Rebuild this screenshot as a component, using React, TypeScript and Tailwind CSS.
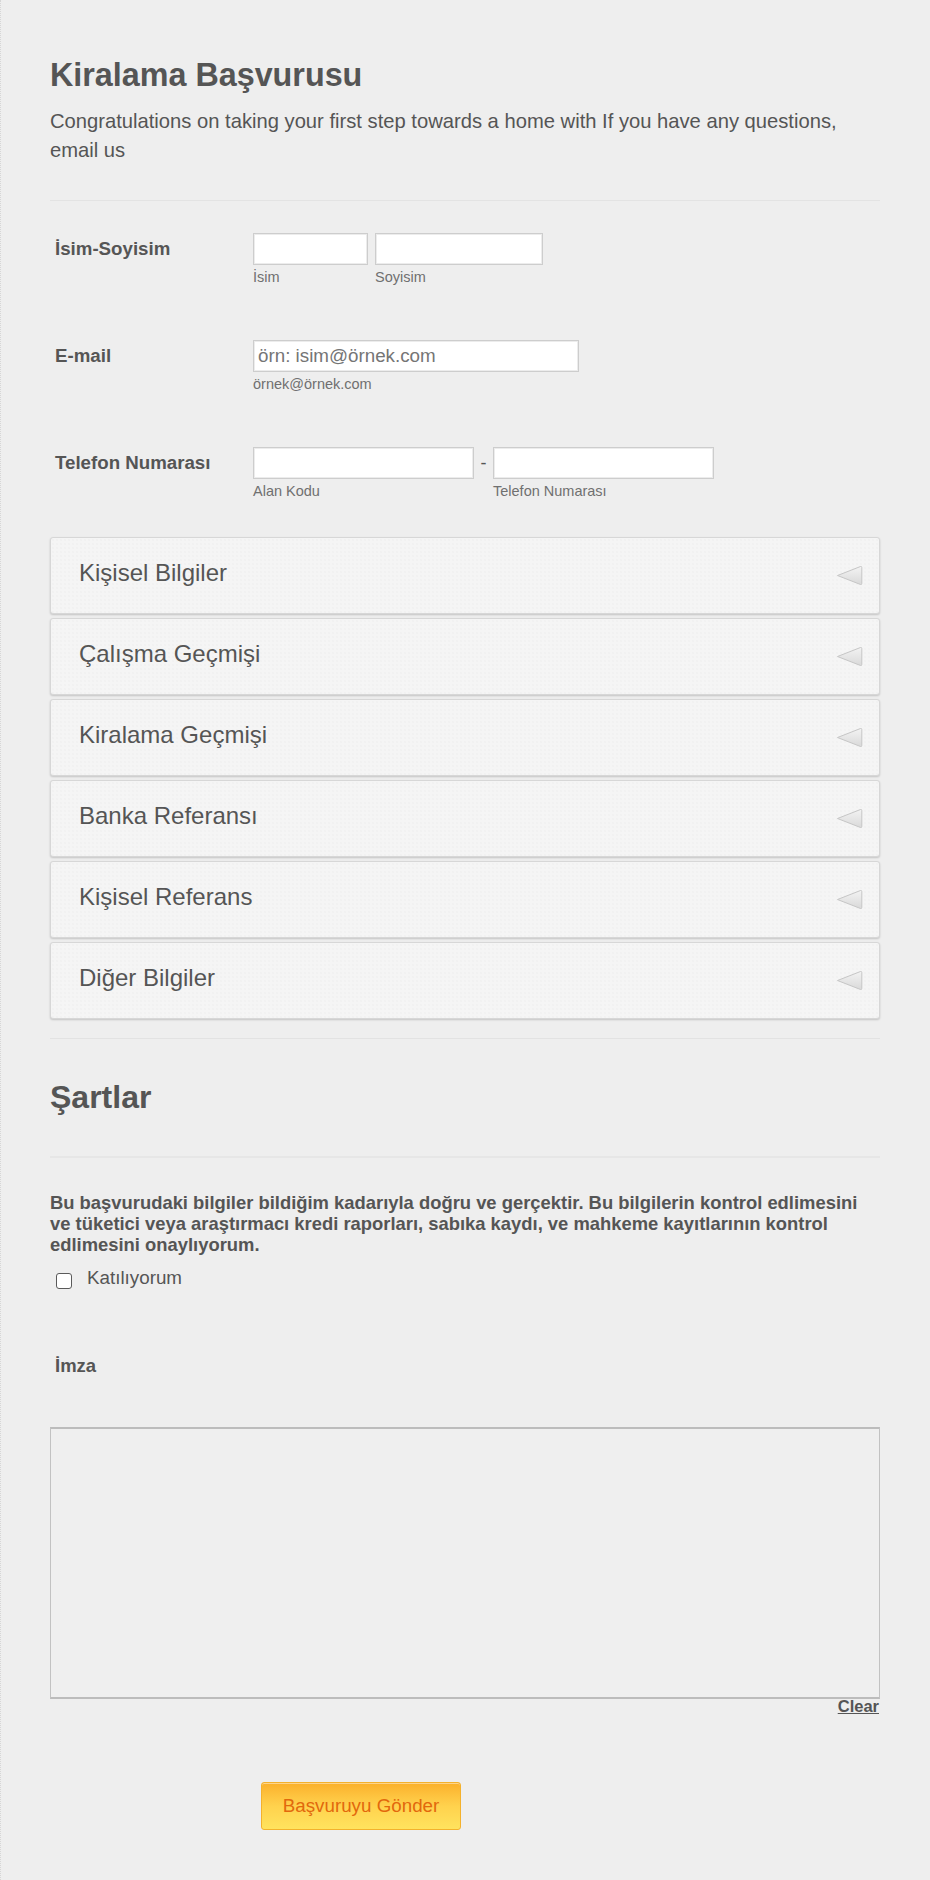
import React from "react";

const FONT = { fontFamily: '"Liberation Sans", Arial, Helvetica, sans-serif' };

function Arrow() {
  return (
    <svg width="27" height="21" viewBox="0 0 27 21" className="shrink-0">
      <defs>
        <linearGradient id="ag" x1="0" y1="0" x2="0" y2="1">
          <stop offset="0" stopColor="#f3f3f3" />
          <stop offset="1" stopColor="#d9d9d9" />
        </linearGradient>
      </defs>
      <path
        d="M1.5 10.5 L24.5 1.5 Q25.8 1.2 25.8 2.6 L25.8 18.4 Q25.8 19.8 24.5 19.5 Z"
        fill="url(#ag)"
        stroke="#c6c6c6"
        strokeWidth="1"
        strokeLinejoin="round"
      />
    </svg>
  );
}

function Panel({ title }: { title: string }) {
  return (
    <div className="h-[77px] rounded-[3px] border border-[#d7d7d7] bg-[#f5f5f5] bg-[radial-gradient(#ececec_0.6px,transparent_0.8px)] bg-[length:4px_4px] shadow-[0_1px_2px_rgba(0,0,0,0.18)] flex items-center justify-between pl-[28px] pr-[16px]">
      <span className="text-[24px] leading-[28px] mb-[5px] text-[#555555]">{title}</span>
      <Arrow />
    </div>
  );
}

function TextBox({ w, placeholder }: { w: string; placeholder?: string }) {
  return (
    <input
      type="text"
      placeholder={placeholder}
      className={`${w} h-[32px] bg-white border border-[#cdcdcd] shadow-[inset_0_0_0_1px_#ececec] px-[4px] text-[18.8px] text-[#555] placeholder:text-[#757575] outline-none`}
      style={FONT}
    />
  );
}

function Sub({ children }: { children: React.ReactNode }) {
  return <div className="mt-[4px] text-[14.5px] leading-[17px] text-[#707070]">{children}</div>;
}

function Label({ children }: { children: React.ReactNode }) {
  return (
    <div className="w-[203px] shrink-0 pl-[5px] pt-[4.5px] text-[18.7px] leading-[22px] font-bold text-[#555555]">
      {children}
    </div>
  );
}

export default function App() {
  const panels = [
    "Kişisel Bilgiler",
    "Çalışma Geçmişi",
    "Kiralama Geçmişi",
    "Banka Referansı",
    "Kişisel Referans",
    "Diğer Bilgiler",
  ];
  return (
    <div
      className="min-h-[1880px] bg-[#eeeeee] border-l border-dotted border-[#d6d6d6] pl-[49px] pr-[50px] pt-[56px] text-[#555555]"
      style={FONT}
    >
      <h1 className="text-[32.3px] leading-[38px] font-bold text-[#555555]">Kiralama Başvurusu</h1>
      <p className="mt-[13px] text-[20.2px] leading-[29px] text-[#555555]">
        Congratulations on taking your first step towards a home with If you have any questions, email us
      </p>
      <div className="mt-[35px] h-px bg-[#e3e3e3]" />

      <div className="mt-[32px] flex flex-col">
        <div className="h-[107px] flex">
          <Label>İsim-Soyisim</Label>
          <div className="flex gap-[7px]">
            <div>
              <TextBox w="w-[115px]" />
              <Sub>İsim</Sub>
            </div>
            <div>
              <TextBox w="w-[168px]" />
              <Sub>Soyisim</Sub>
            </div>
          </div>
        </div>
        <div className="h-[107px] flex">
          <Label>E-mail</Label>
          <div>
            <TextBox w="w-[326px]" placeholder="örn: isim@örnek.com" />
            <Sub>örnek@örnek.com</Sub>
          </div>
        </div>
        <div className="h-[90px] flex">
          <Label>Telefon Numarası</Label>
          <div className="flex">
            <div>
              <TextBox w="w-[221px]" />
              <Sub>Alan Kodu</Sub>
            </div>
            <div className="w-[19px] h-[32px] flex items-center justify-center text-[18px] text-[#555]">-</div>
            <div>
              <TextBox w="w-[221px]" />
              <Sub>Telefon Numarası</Sub>
            </div>
          </div>
        </div>
      </div>

      <div className="flex flex-col gap-[4px]">
        {panels.map((p) => (
          <Panel key={p} title={p} />
        ))}
      </div>

      <div className="mt-[19px] h-px bg-[#e2e2e2]" />
      <h2 className="mt-[39px] text-[32px] leading-[38px] font-bold text-[#555555]">Şartlar</h2>
      <div className="mt-[40px] h-[2px] bg-[#e6e6e6]" />

      <p className="mt-[34px] text-[18.4px] leading-[21px] font-bold text-[#555555]">
        Bu başvurudaki bilgiler bildiğim kadarıyla doğru ve gerçektir. Bu bilgilerin kontrol edlimesini ve tüketici veya
        araştırmacı kredi raporları, sabıka kaydı, ve mahkeme kayıtlarının kontrol edlimesini onaylıyorum.
      </p>
      <label className="mt-[12px] flex items-start">
        <span className="ml-[6px] mt-[6px] w-[16px] h-[16px] rounded-[3px] border border-[#5a5a5a] bg-white shrink-0" />
        <span className="ml-[15px] text-[18.8px] leading-[22px] text-[#555555]">Katılıyorum</span>
      </label>

      <div className="mt-[66px] pl-[5px] text-[18.5px] leading-[21px] font-bold text-[#555555]">İmza</div>
      <div className="mt-[51px] h-[272px] border-x border-x-[#c2c2c2] border-y-2 border-y-[#bcbcbc] bg-[#efefef]" />
      <div className="-mt-[2px] flex justify-end pr-[1px]">
        <span className="text-[16.5px] leading-[18px] font-bold underline text-[#555555]">Clear</span>
      </div>

      <div className="mt-[67px] ml-[211px]">
        <button
          className="w-[200px] h-[48px] rounded-[3px] border border-[#f4b12c] bg-gradient-to-b from-[#fbb02a] via-[#ffd24d] to-[#ffe35e] shadow-[inset_0_1px_0_rgba(255,255,255,0.45)] text-[18.8px] text-[#e2680c]"
          style={FONT}
        >
          Başvuruyu Gönder
        </button>
      </div>
    </div>
  );
}
